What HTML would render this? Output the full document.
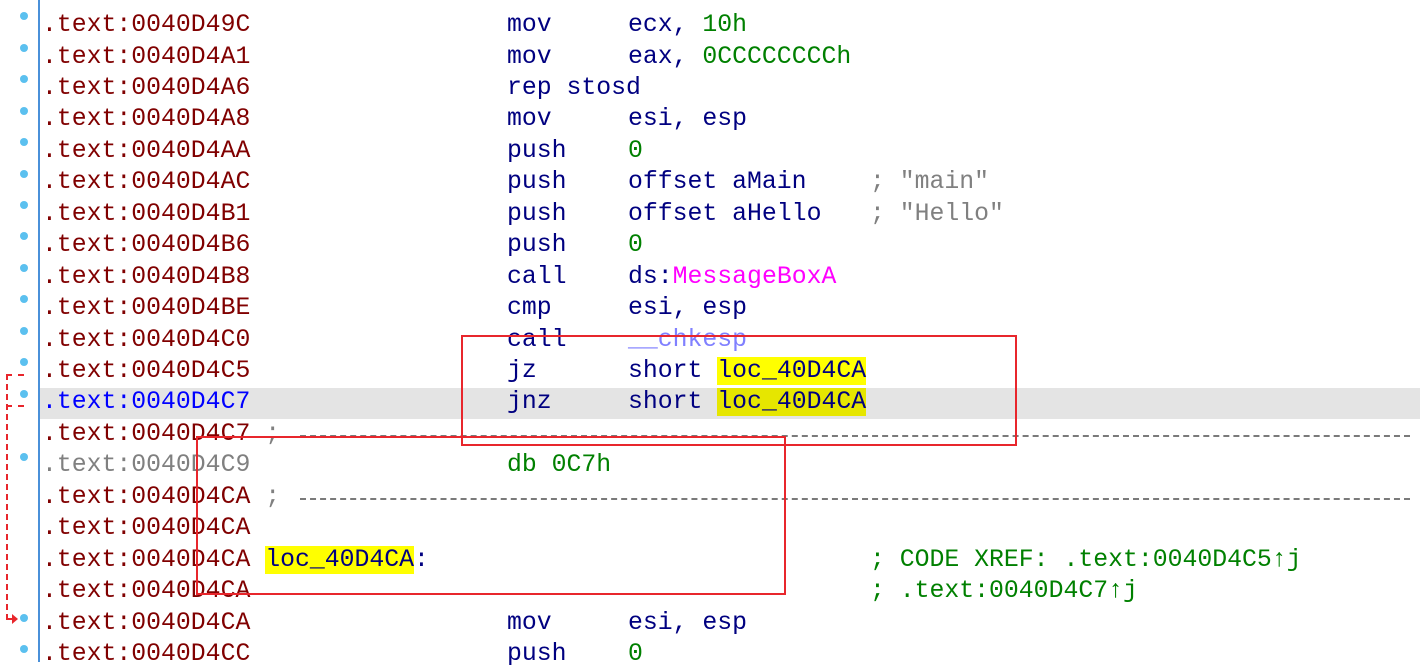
<!DOCTYPE html>
<html><head><meta charset="utf-8"><style>
body{margin:0;width:1420px;height:662px;background:#fff;overflow:hidden;position:relative;font-family:"Liberation Mono",monospace;font-size:24.8px;}
.r{position:absolute;left:0;width:1420px;height:31.45px;line-height:31.45px;white-space:pre;}
.r span{position:absolute;top:0;}
.a{left:42px;color:#800000}
.m{left:507px;color:#000080}
.o{left:628px;color:#000080}
.c{left:870px;color:#808080}
.g{color:#008000}
.y{background:#ffff00}
.dot{position:absolute;left:20px;width:8px;height:8px;border-radius:50%;background:#5bc0ef}
.dash{position:absolute;height:0;border-top:2px dashed #7a7a7a}
.box{position:absolute;border:2px solid #e8262c}
</style></head><body>
<div style="position:absolute;left:38px;top:0;width:2px;height:662px;background:#4a90d9"></div>
<div style="position:absolute;left:40px;top:388px;width:1380px;height:31px;background:#e4e4e4"></div>

<div class="r" style="top:10px"><span class="a">.text:0040D49C</span><span class="m">mov</span><span class="o">ecx, <b class="g" style="font-weight:normal">10h</b></span></div>
<div class="r" style="top:41.5px"><span class="a">.text:0040D4A1</span><span class="m">mov</span><span class="o">eax, <b class="g" style="font-weight:normal">0CCCCCCCCh</b></span></div>
<div class="r" style="top:72.9px"><span class="a">.text:0040D4A6</span><span class="m">rep stosd</span></div>
<div class="r" style="top:104.4px"><span class="a">.text:0040D4A8</span><span class="m">mov</span><span class="o">esi, esp</span></div>
<div class="r" style="top:135.8px"><span class="a">.text:0040D4AA</span><span class="m">push</span><span class="o g">0</span></div>
<div class="r" style="top:167.3px"><span class="a">.text:0040D4AC</span><span class="m">push</span><span class="o">offset aMain</span><span class="c">; "main"</span></div>
<div class="r" style="top:198.7px"><span class="a">.text:0040D4B1</span><span class="m">push</span><span class="o">offset aHello</span><span class="c">; "Hello"</span></div>
<div class="r" style="top:230.2px"><span class="a">.text:0040D4B6</span><span class="m">push</span><span class="o g">0</span></div>
<div class="r" style="top:261.6px"><span class="a">.text:0040D4B8</span><span class="m">call</span><span class="o">ds:<b style="font-weight:normal;color:#ff00ff">MessageBoxA</b></span></div>
<div class="r" style="top:293.1px"><span class="a">.text:0040D4BE</span><span class="m">cmp</span><span class="o">esi, esp</span></div>
<div class="r" style="top:324.5px"><span class="a">.text:0040D4C0</span><span class="m">call</span><span class="o" style="color:#8080ff">__chkesp</span></div>
<div class="r" style="top:356px"><span class="a">.text:0040D4C5</span><span class="m">jz</span><span class="o">short <b class="y" style="font-weight:normal">loc_40D4CA</b></span></div>
<div class="r" style="top:387.4px"><span class="a" style="color:#0000ff">.text:0040D4C7</span><span class="m">jnz</span><span class="o">short <b class="y" style="font-weight:normal;background:#e6e600">loc_40D4CA</b></span></div>
<div class="r" style="top:418.9px"><span class="a">.text:0040D4C7 <i style="font-style:normal;color:#808080">;</i></span></div>
<div class="r" style="top:450.3px"><span class="a" style="color:#808080">.text:0040D4C9</span><span class="m g">db 0C7h</span></div>
<div class="r" style="top:481.8px"><span class="a">.text:0040D4CA <i style="font-style:normal;color:#808080">;</i></span></div>
<div class="r" style="top:513.2px"><span class="a">.text:0040D4CA</span></div>
<div class="r" style="top:544.7px"><span class="a">.text:0040D4CA <b class="y" style="font-weight:normal;color:#000080">loc_40D4CA</b><b style="font-weight:normal;color:#000080">:</b></span><span class="c g">; CODE XREF: .text:0040D4C5↑j</span></div>
<div class="r" style="top:576.1px"><span class="a">.text:0040D4CA</span><span class="c g">; .text:0040D4C7↑j</span></div>
<div class="r" style="top:607.6px"><span class="a">.text:0040D4CA</span><span class="m">mov</span><span class="o">esi, esp</span></div>
<div class="r" style="top:639px"><span class="a">.text:0040D4CC</span><span class="m">push</span><span class="o g">0</span></div>

<div class="dash" style="left:300px;top:435px;width:1110px"></div>
<div class="dash" style="left:300px;top:498px;width:1110px"></div>

<div class="dot" style="top:12px"></div><div class="dot" style="top:44px"></div><div class="dot" style="top:75px"></div><div class="dot" style="top:107px"></div><div class="dot" style="top:138px"></div><div class="dot" style="top:170px"></div><div class="dot" style="top:201px"></div><div class="dot" style="top:232px"></div><div class="dot" style="top:264px"></div><div class="dot" style="top:295px"></div><div class="dot" style="top:327px"></div><div class="dot" style="top:358px"></div><div class="dot" style="top:390px"></div><div class="dot" style="top:453px"></div><div class="dot" style="top:614px"></div><div class="dot" style="top:645px"></div>

<div style="position:absolute;left:6px;top:374px;width:0;height:246px;border-left:2px dashed #e8262c"></div>
<div style="position:absolute;left:6px;top:374px;width:18px;border-top:2px dashed #e8262c"></div>
<div style="position:absolute;left:6px;top:405px;width:18px;border-top:2px dashed #e8262c"></div>
<div style="position:absolute;left:6px;top:618px;width:6px;border-top:2px solid #e8262c"></div>
<div style="position:absolute;left:12px;top:614px;width:0;height:0;border-left:6px solid #e8262c;border-top:5px solid transparent;border-bottom:5px solid transparent"></div>

<div class="box" style="left:461px;top:335px;width:552px;height:107px"></div>
<div class="box" style="left:196px;top:436px;width:586px;height:155px"></div>
</body></html>
